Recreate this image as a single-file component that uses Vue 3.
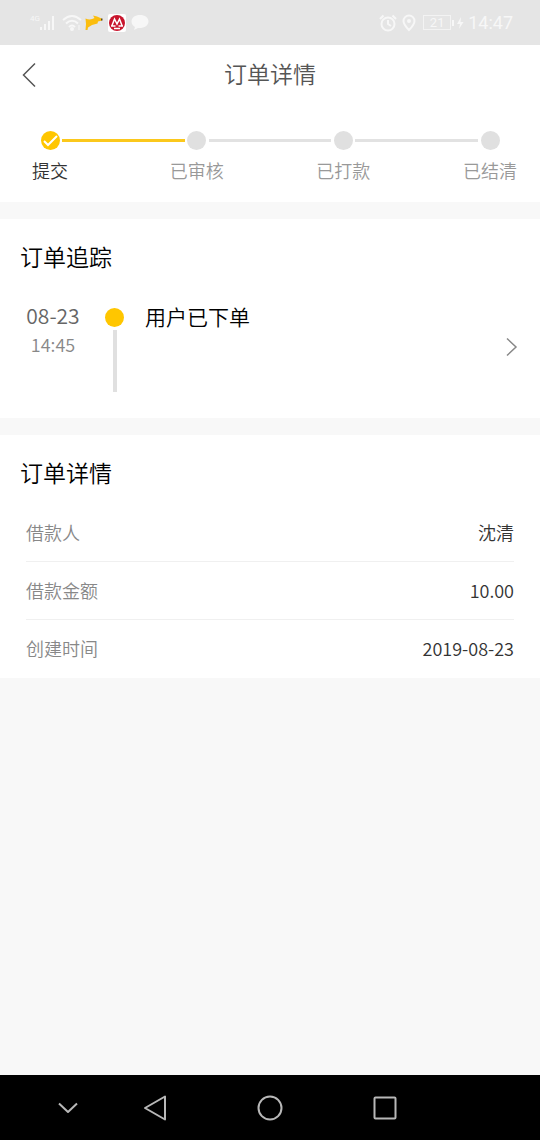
<template>
  <div class="page">
    <div class="status-bar">
      <div class="status-left">
        <div class="signal">
          <span class="network">4G</span>
          <svg width="16" height="16" viewBox="0 0 16 16">
            <path d="M0 12h2v3H0zM4 9h2v6H4zM8 6h2v9H8zM12 1h2v14h-2z" fill="currentColor" />
          </svg>
        </div>
        <svg class="wifi" width="20" height="18" viewBox="0 0 20 18" fill="none" stroke="currentColor" stroke-width="2">
          <path d="M1 6Q10 -2 19 6M4 9.500Q10 4 16 9.500M7 13Q10 10 13 13" />
          <circle cx="10" cy="15" r="1" fill="currentColor" />
          <path d="M17 11v5" stroke-width="1" />
        </svg>
        <svg class="deer" width="18" height="17" viewBox="0 0 18 17">
          <path d="M.5 4.500C4 6 7 5.500 9.500 4L8 1.500L12 2.500L16.500 4.500L17 6.500L13 7.500L12.500 9.500L7 11L3 13.500L2.500 16H.5L1 10Z" fill="#fbbd0d" />
          <path d="M16 4.500h1.500v2H16z" fill="#5c4a22" />
        </svg>
        <svg class="bank" width="18" height="18" viewBox="0 0 18 18">
          <rect width="18" height="18" rx="2" fill="#fff" />
          <circle cx="9" cy="9" r="8" fill="#c8152d" />
          <path d="M4 11.500L6.500 5L9 10L11.500 5L14 11.500M3 12H7.500M10.500 12H15M6 14.500H12" fill="none" stroke="#fff" stroke-width="1.500" />
        </svg>
        <svg class="bubble" width="18" height="17" viewBox="0 0 18 17">
          <path d="M9 1C4 1 .5 3.700 .5 7.500C.5 10 2 12 4 13L3 16L7 14C13 14.500 17.500 11.500 17.500 7.500C17.500 3.700 14 1 9 1Z" fill="currentColor" />
        </svg>
      </div>
      <div class="status-right">
        <svg width="18" height="18" viewBox="0 0 18 18" fill="none" stroke="currentColor" stroke-width="2">
          <circle cx="9" cy="10" r="6.500" />
          <path d="M9 6v4l3 2M1 5L4.500 1.500M17 5L13.500 1.500" />
        </svg>
        <svg class="pin" width="14" height="18" viewBox="0 0 14 18" fill="none" stroke="currentColor" stroke-width="2">
          <path d="M7 16C3 12 1.500 9.500 1.500 7a5.500 5.500 0 0 1 11 0C12.500 9.500 11 12 7 16Z" />
          <circle cx="7" cy="7" r="1" fill="currentColor" />
        </svg>
        <span class="battery">21</span>
        <svg class="charge" width="12" height="14" viewBox="0 0 12 14" fill="currentColor">
          <path d="M0 4h2v6H0zM9 1L5 8h3L7 13L11.500 6H8.500Z" />
        </svg>
        <span class="clock">14:47</span>
      </div>
    </div>

    <header class="header">
      <button class="back" type="button" aria-label="返回">
        <svg width="14" height="26" viewBox="0 0 14 26">
          <path d="M13 1.500L1.500 13L13 24.500" fill="none" stroke="currentColor" stroke-width="1.500" />
        </svg>
      </button>
      <h1>订单详情</h1>
    </header>

    <main>
      <section class="steps">
        <template v-for="(step, index) in steps" :key="step">
          <div v-if="index > 0" class="line" :class="{ done: index <= current + 1 }"></div>
          <div class="step" :class="{ done: index <= current }">
            <span class="dot">
              <svg v-if="index <= current" width="19" height="19" viewBox="0 0 19 19">
                <path d="M3 10L7 14L16 5" fill="none" stroke="#fff" stroke-width="2" />
              </svg>
            </span>
            <span class="step-label">{{ step }}</span>
          </div>
        </template>
      </section>

      <section class="card tracking">
        <h2>订单追踪</h2>
        <a v-for="item in tracking" :key="item.time" class="track" href="#">
          <div class="when">
            <span class="date">{{ item.date }}</span>
            <span class="time">{{ item.time }}</span>
          </div>
          <div class="marker">
            <span class="dot"></span>
            <span class="stem"></span>
          </div>
          <span class="event">{{ item.text }}</span>
          <svg class="chevron" width="12" height="20" viewBox="0 0 12 20">
            <path d="M1 1.500L10 10L1 18.500" fill="none" stroke="currentColor" stroke-width="1.500" />
          </svg>
        </a>
      </section>

      <section class="card">
        <h2>订单详情</h2>
        <dl>
          <div v-for="row in details" :key="row.label" class="row">
            <dt>{{ row.label }}</dt>
            <dd>{{ row.value }}</dd>
          </div>
        </dl>
      </section>
    </main>

    <nav class="nav-bar">
      <button type="button" aria-label="收起">
        <svg width="26" height="26" viewBox="0 0 26 26"><path d="M4 8.500L13 17L22 8.500" /></svg>
      </button>
      <button type="button" aria-label="后退">
        <svg width="26" height="26" viewBox="0 0 26 26"><path d="M23 1.500V24.500L3 13Z" /></svg>
      </button>
      <button type="button" aria-label="主页">
        <svg width="26" height="26" viewBox="0 0 26 26"><circle cx="13" cy="13" r="11.500" /></svg>
      </button>
      <button type="button" aria-label="最近任务">
        <svg width="26" height="26" viewBox="0 0 26 26"><rect x="2.500" y="2.500" width="21" height="21" rx="1" /></svg>
      </button>
    </nav>
  </div>
</template>

<script setup>
import { ref } from "vue";

const steps = ["提交", "已审核", "已打款", "已结清"];
const current = ref(0);

const tracking = ref([{ date: "08-23", time: "14:45", text: "用户已下单" }]);

const details = ref([
  { label: "借款人", value: "沈清" },
  { label: "借款金额", value: "10.00" },
  { label: "创建时间", value: "2019-08-23" },
]);
</script>

<style>
body {
  margin: 0;
  background: #f8f8f8;
}
</style>

<style scoped>
.page {
  display: flex;
  flex-direction: column;
  min-height: 100vh;
  font-family: "Noto Sans CJK SC", sans-serif;
  font-size: 18px;
  font-weight: 350;
  color: #333;
}

svg {
  display: block;
}

h1,
h2,
dl,
dd {
  margin: 0;
  font-weight: 350;
}

button {
  padding: 0;
  border: 0;
  background: none;
  color: inherit;
}

.status-bar {
  display: flex;
  justify-content: space-between;
  align-items: center;
  height: 45px;
  padding: 0 27px 0 30px;
  background: #e5e5e5;
  color: #f7f7f7;
  font-family: Roboto, sans-serif;
  font-weight: 400;
}

.status-left,
.status-right,
.signal {
  display: flex;
  align-items: center;
}

.signal {
  align-items: flex-start;
}

.network {
  width: 10px;
  font-size: 8px;
  line-height: 8px;
}

.wifi {
  margin-left: 6px;
}

.deer {
  margin-left: 3px;
}

.bank {
  margin-left: 5px;
}

.bubble {
  margin-left: 5px;
}

.pin {
  margin-left: 5px;
}

.battery {
  width: 26px;
  margin-left: 7px;
  border: 1px solid #f3f3f3;
  font-size: 13px;
  line-height: 13px;
  text-align: center;
}

.charge {
  margin-left: 1px;
}

.clock {
  margin-left: 4px;
  font-size: 18px;
}

.header {
  display: grid;
  grid-template-columns: 60px 1fr 60px;
  align-items: center;
  height: 60px;
  background: #fff;
  color: #555;
}

.back {
  padding-left: 22px;
}

.header h1 {
  padding-bottom: 4px;
  font-size: 23px;
  line-height: 34px;
  text-align: center;
}

.steps {
  display: flex;
  padding: 26px 23px 19px;
  background: #fff;
}

.step {
  display: flex;
  flex-direction: column;
  align-items: center;
  width: 54px;
  color: #999;
}

.step.done {
  color: #333;
}

.step-label {
  margin-top: 7px;
  line-height: 26px;
  white-space: nowrap;
}

.dot {
  width: 19px;
  height: 19px;
  border-radius: 50%;
  background: #e0e0e0;
}

.done .dot,
.marker .dot {
  background: #ffc600;
}

.line {
  flex: 1;
  height: 3px;
  margin: 8px -15px 0;
  background: #e2e2e2;
}

.line.done {
  background: #fbc81c;
}

.card {
  margin-top: 17px;
  padding-top: 18px;
  background: #fff;
}

.card h2 {
  padding: 0 20px;
  font-size: 23px;
  line-height: 38px;
  color: #000;
}

.card.tracking {
  padding-bottom: 26px;
}

.track {
  display: flex;
  margin-top: 26px;
  padding: 0 22px 0 26px;
  color: #000;
  text-decoration: none;
}

.when {
  display: flex;
  flex-direction: column;
  align-items: center;
  width: 54px;
}

.date {
  font-size: 21px;
  line-height: 28px;
  color: #666;
}

.time {
  line-height: 30px;
  color: #888;
}

.marker {
  display: flex;
  flex-direction: column;
  align-items: center;
  margin: 0 21px 0 25px;
  padding-top: 7px;
}

.stem {
  width: 4px;
  height: 62px;
  margin-top: 3px;
  background: #e0e0e0;
}

.event {
  flex: 1;
  font-size: 21px;
  line-height: 30px;
}

.chevron {
  align-self: center;
  color: #888;
}

dl {
  margin-top: 13px;
  padding: 0 26px;
}

.row {
  display: flex;
  justify-content: space-between;
  box-sizing: border-box;
  height: 58px;
  border-bottom: 1px solid #f0f0f0;
  line-height: 57px;
}

.row:last-child {
  border-bottom: 0;
}

.row dt {
  color: #888;
}

.nav-bar {
  display: grid;
  grid-template-columns: 59px repeat(3, 1fr);
  height: 65px;
  margin-top: auto;
  padding: 0 98px 0 38px;
  background: #000;
  color: #b8b8b8;
}

.nav-bar button {
  display: flex;
  align-items: center;
  justify-content: center;
}

.nav-bar svg {
  fill: none;
  stroke: currentColor;
  stroke-width: 2;
  stroke-linejoin: round;
}
</style>
